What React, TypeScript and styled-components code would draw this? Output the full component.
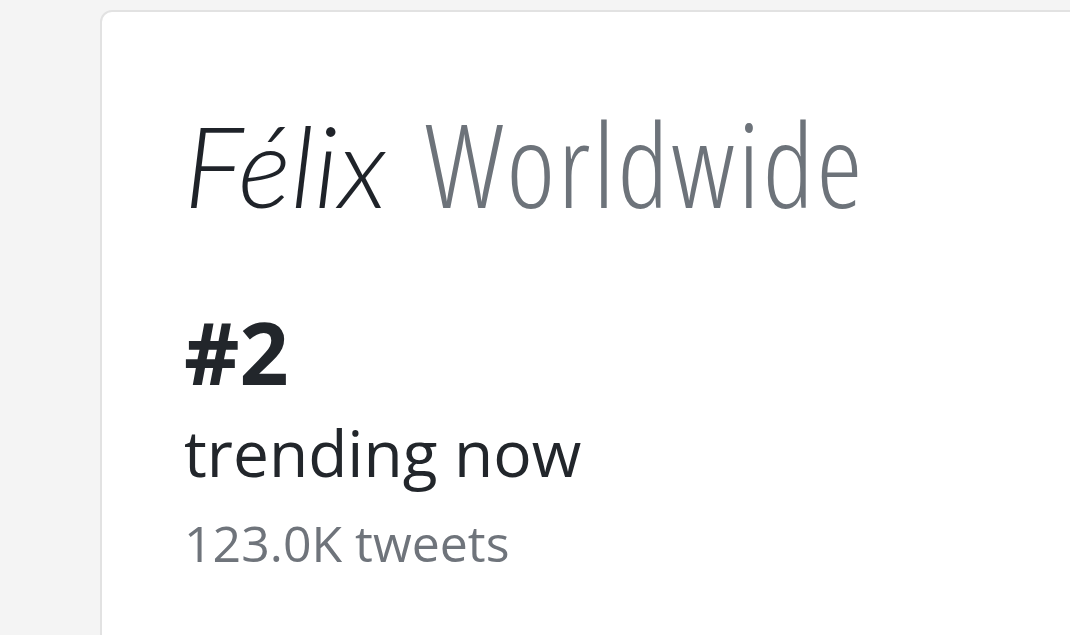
import React from "react";
import styled, { createGlobalStyle } from "styled-components";

const Global = createGlobalStyle`
  html, body { margin: 0; padding: 0; background: #f4f4f4; }
  body { font-family: "Open Sans", "Noto Sans", sans-serif; overflow: hidden; }
`;

const Page = styled.div`
  width: 1070px;
  height: 635px;
  padding: 10px 0 0 100px;
  box-sizing: border-box;
  overflow: hidden;
`;

const Card = styled.section`
  width: 1000px;
  height: 660px;
  box-sizing: border-box;
  background: #ffffff;
  border: 2px solid #e2e2e2;
  border-radius: 12px;
  padding: 93px 0 0 82px;
  display: flex;
  flex-direction: column;
`;

const Title = styled.h1`
  margin: 0;
  font-family: "Lato", "Open Sans", sans-serif;
  font-size: 112px;
  font-weight: 300;
  line-height: 1;
  white-space: nowrap;
`;

const Name = styled.em`
  font-style: italic;
  color: #1f2329;
`;

const Place = styled.span`
  margin-left: 8px;
  font-family: "Open Sans", sans-serif;
  font-stretch: 75%;
  font-size: 116px;
  letter-spacing: 3px;
  color: #6d737a;
`;

const Rank = styled.div`
  margin-top: 88px;
  font-size: 86px;
  font-weight: 700;
  line-height: 1;
  color: #22262b;
`;

const Label = styled.div`
  margin-top: 26px;
  font-size: 64px;
  font-weight: 400;
  line-height: 1;
  color: #22262b;
`;

const Count = styled.div`
  margin-top: 33px;
  font-size: 50px;
  font-weight: 400;
  line-height: 1;
  color: #6f747b;
`;

export default function App() {
  return (
    <>
      <Global />
      <Page>
        <Card>
          <Title>
            <Name>Félix</Name> <Place>Worldwide</Place>
          </Title>
          <Rank>#2</Rank>
          <Label>trending now</Label>
          <Count>123.0K tweets</Count>
        </Card>
      </Page>
    </>
  );
}
